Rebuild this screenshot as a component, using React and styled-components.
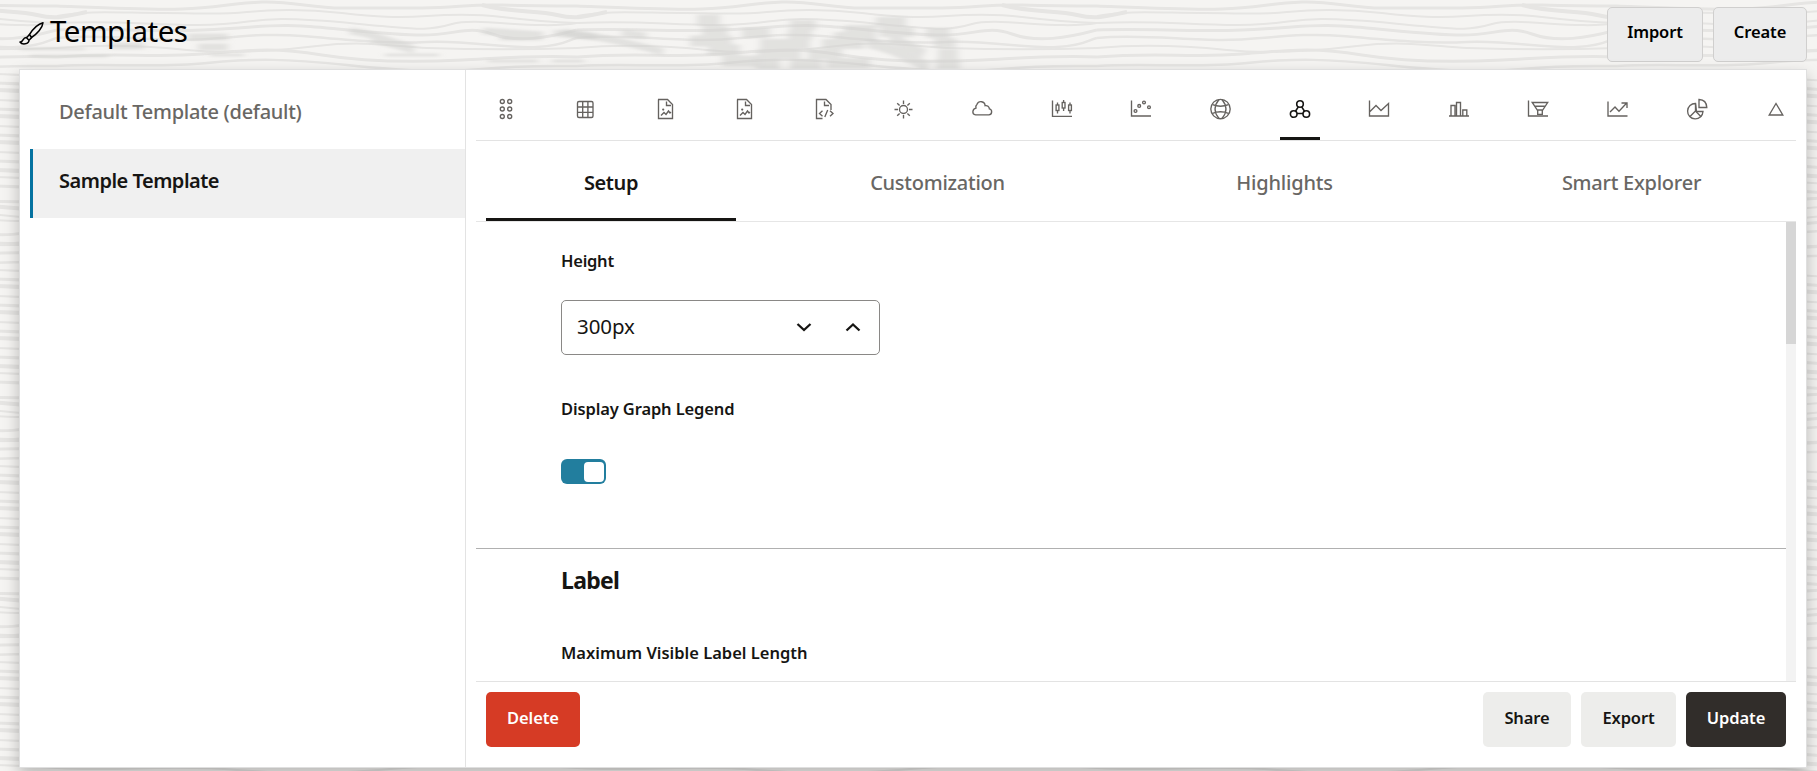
import React from "react";
import styled, { createGlobalStyle } from "styled-components";

const GlobalStyle = createGlobalStyle`
  * { box-sizing: border-box; }
  html, body, #root { height: 100%; margin: 0; }
  body {
    overflow: hidden;
    background: #f5f4f2;
    color: #161513;
    font-family: "Noto Sans", "Open Sans", sans-serif;
  }
  button { font-family: inherit; }
`;

const Page = styled.div`
  position: relative;
  isolation: isolate;
  height: 100vh;
  display: flex;
  flex-direction: column;
  padding: 0 10px 3px 19px;
  overflow: hidden;
`;

const Backdrop = styled.svg`
  position: absolute;
  inset: 0;
  z-index: -1;
  width: 100%;
  height: 100%;
`;

const Header = styled.header`
  flex: none;
  height: 69px;
  display: flex;
  justify-content: space-between;
  align-items: flex-start;
  padding-top: 7px;
`;

const Title = styled.h1`
  display: flex;
  align-items: center;
  gap: 6px;
  margin: 0;
  height: 48px;
  font-size: 29.5px;
  font-weight: 400;
  line-height: 48px;
  letter-spacing: -0.55px;
  color: #000;
`;

const BrushIcon = styled.svg`
  width: 25px;
  height: 23px;
  margin-top: 5px;
`;

const TitleText = styled.span`
  display: block;
`;

const ButtonGroup = styled.div`
  display: flex;
  gap: 10px;
`;

const variants = {
  outlined: "background: #ececec; color: #000; border: 1px solid #d0cfce;",
  neutral: "background: #ededeb; color: #161513; border: 0;",
  danger: "background: #d63b25; color: #fff; border: 0;",
  primary: "background: #312d2a; color: #fff; border: 0;",
};

const Button = styled.button`
  width: ${(p) => p.$width}px;
  height: 55px;
  padding: 0 0 ${(p) => (p.$variant === "outlined" ? 6 : 5)}px;
  border-radius: 5px;
  font-size: 16.5px;
  font-weight: 600;
  letter-spacing: -0.1px;
  ${(p) => variants[p.$variant]}
`;

const Panel = styled.div`
  flex: 1;
  min-height: 0;
  display: flex;
  border: 1px solid #dfdfdf;
  background: #fff;
  box-shadow: 0 7px 15px rgba(0, 0, 0, 0.25);
`;

const Sidebar = styled.nav`
  flex: none;
  width: 446px;
  padding: 10px 0 0 10px;
  border-right: 1px solid #e3e3e3;
`;

const SidebarItem = styled.div`
  height: 69px;
  padding: 0 0 6px ${(p) => (p.$active ? 26 : 29)}px;
  display: flex;
  align-items: center;
  border-left: ${(p) => (p.$active ? "3px solid #0572a0" : "0")};
  background: ${(p) => (p.$active ? "#f0f0f0" : "transparent")};
  color: ${(p) => (p.$active ? "#161513" : "#696764")};
  font-size: 20px;
  font-weight: ${(p) => (p.$active ? 600 : 500)};
  letter-spacing: ${(p) => p.$spacing}px;
`;

const Main = styled.main`
  flex: 1;
  min-width: 0;
  display: flex;
  flex-direction: column;
  padding: 0 10px;
`;

const IconBar = styled.div`
  flex: none;
  height: 71px;
  display: flex;
  justify-content: space-between;
  padding: 0 0 0 10px;
  border-bottom: 1px solid #e3e3e3;
`;

const IconTab = styled.div`
  width: 40px;
  display: flex;
  justify-content: center;
  align-items: center;
  padding-top: ${(p) => (p.$active ? 11 : 8)}px;
  border-bottom: ${(p) => (p.$active ? "3px solid #161513" : "0")};
  color: ${(p) => (p.$active ? "#161513" : "#65625f")};
`;

const Glyph = styled.svg`
  width: 22px;
  height: 22px;
  fill: none;
  stroke: currentColor;
  stroke-width: ${(p) => (p.$bold ? 1.6 : 1.35)};
`;

const Tabs = styled.div`
  flex: none;
  height: 81px;
  display: flex;
  justify-content: space-between;
  padding-left: 10px;
  border-bottom: 1px solid #e6e6e6;
`;

const Tab = styled.div`
  width: ${(p) => p.$width}px;
  display: flex;
  justify-content: center;
  align-items: center;
  padding-top: ${(p) => (p.$active ? 6 : 3)}px;
  border-bottom: ${(p) => (p.$active ? "3px solid #161513" : "0")};
  color: ${(p) => (p.$active ? "#161513" : "#696764")};
  font-size: 20px;
  font-weight: ${(p) => (p.$active ? 600 : 500)};
  letter-spacing: ${(p) => p.$spacing}px;
`;

const ScrollArea = styled.div`
  flex: 1;
  min-height: 0;
  display: flex;
`;

const Scrollbar = styled.div`
  width: 10px;
  background: #f3f3f3;
`;

const Thumb = styled.div`
  height: 122px;
  background: #d6d6d6;
`;

const Form = styled.div`
  flex: 1;
  overflow: hidden;
`;

const Section = styled.section`
  padding: ${(p) => p.$top}px 0 0 85px;
  height: ${(p) => p.$height}px;
  border-bottom: ${(p) => (p.$ruled ? "1px solid #b0b0b0" : "0")};
`;

const Label = styled.div`
  height: 24px;
  line-height: 24px;
  font-size: 16.5px;
  font-weight: 600;
  letter-spacing: ${(p) => p.$spacing || 0}px;
  white-space: nowrap;
`;

const Heading = styled.h2`
  margin: 0 0 46px;
  height: 30px;
  line-height: 30px;
  font-size: 23px;
  font-weight: 700;
  letter-spacing: -0.7px;
`;

const Stepper = styled.div`
  width: 319px;
  height: 55px;
  margin: 27px 0 42px;
  display: flex;
  align-items: center;
  padding: 0 17px 0 15px;
  border: 1px solid #8a8886;
  border-radius: 5px;
`;

const StepperValue = styled.span`
  flex: 1;
  margin-top: -4px;
  font-size: 20.5px;
  letter-spacing: -0.1px;
`;

const Chevron = styled.svg`
  width: 18px;
  height: 18px;
  margin-left: 31px;
  margin-top: -1px;
  fill: none;
  stroke: #161513;
  stroke-width: 2.3;
`;

const Switch = styled.div`
  width: 45px;
  height: 25px;
  margin-top: 38px;
  padding: 3px 2px;
  display: flex;
  justify-content: flex-end;
  border-radius: 6px;
  background: #227e9e;
`;

const Knob = styled.div`
  width: 20px;
  height: 20px;
  border-radius: 4px;
  background: #fff;
`;

const Footer = styled.footer`
  flex: none;
  height: 86px;
  display: flex;
  justify-content: space-between;
  padding: 10px;
  border-top: 1px solid #e3e3e3;
`;

const docShape = (
  <>
    <path d="M4 1.5h9.5l5 5v14h-14v-19z" />
    <path d="M12.5 3.5v4h4.5" />
  </>
);
const picture = (
  <>
    {docShape}
    <path d="M7 17.500l3-3 2 2 2.500-3.500 1.500 2 1-1" />
    <circle cx="9.200" cy="11.600" r="1.100" fill="currentColor" stroke="none" />
  </>
);

const icons = {
  dots: (
    <>
      {[7.300, 14.700].map((x) =>
        [3.500, 11, 18.500].map((y) => <circle key={x + "-" + y} cx={x} cy={y} r="2" />)
      )}
    </>
  ),
  table: (
    <>
      <rect x="3.500" y="3.500" width="15.500" height="16" rx="1.500" />
      <path d="M3.500 9h15.500M3.500 14.300h15.500M8.700 3.500v16M13.900 3.500v16" />
    </>
  ),
  picture,
  picture2: picture,
  code: (
    <>
      <path d="M9.500 20.500h-6v-19h9.500l5 5v5.500" />
      <path d="M11.500 3.500v4h4.500M9.500 12.700l-3 2.800 3 2.800M17 12.700l3 2.800-3 2.800M14.700 12l-2.900 7" />
    </>
  ),
  sun: (
    <>
      <circle cx="11.500" cy="11.500" r="4" />
      <path d="M11.500 2.500v3.500M11.500 17v3.500M2.500 11.500h3.500M17 11.500h3.500M5.200 5.200l2.400 2.400M15.400 15.400l2.400 2.400M5.200 17.800l2.400-2.400M15.400 7.600l2.400-2.400" />
    </>
  ),
  cloud: (
    <path d="M4.600 16.800h13.200a3 3 0 0 0 .6-5.900 3.400 3.400 0 0 0-4.300-3.200A4.200 4.200 0 0 0 6 6.300a3.800 3.800 0 0 0-1 3.800c-3.700.8-4.500 6.200-.4 6.700z" />
  ),
  candles: (
    <>
      <path d="M1.500 2.500v15.800h19.500" />
      <path d="M6.500 4.500v2.500M6.500 12.500v3M12.600 2v2.500M12.600 10v3M19 4.500v2.500M19 12.500v3" />
      <rect x="5.100" y="7" width="2.800" height="5.500" />
      <rect x="11.200" y="4.500" width="2.800" height="5.500" />
      <rect x="17.600" y="7" width="2.800" height="5.500" />
    </>
  ),
  scatter: (
    <>
      <path d="M1.500 2.500v15.500h19.500" />
      <circle cx="5.500" cy="13" r="1.400" />
      <circle cx="9.200" cy="7.900" r="1.400" />
      <circle cx="14" cy="4.500" r="1.400" />
      <circle cx="19" cy="9.200" r="1.400" />
    </>
  ),
  globe: (
    <>
      <circle cx="11.500" cy="11" r="9.700" />
      <path d="M3.500 6.700c5 1.900 11 1.900 16 0M3.500 15.300c5-1.900 11-1.900 16 0M10 1.500c-5 6-5 13 0 19M13 1.500c5 6 5 13 0 19" />
    </>
  ),
  network: (
    <>
      <circle cx="11" cy="6" r="3.300" />
      <circle cx="4.700" cy="16" r="3.300" />
      <circle cx="17.300" cy="16" r="3.300" />
      <path d="M9.300 8.900l-2.800 4.400M12.700 8.900l2.800 4.400M8 15.500h6" />
    </>
  ),
  area: <path d="M1.500 2.500v15.500h19V5.500l-7.500 7-5-5L1.500 14" />,
  bars: <path d="M1 18h20M3 18V7.500h4V18M8.500 18V4.500h4V18M14.800 18v-6h4V18" />,
  funnel: (
    <>
      <path d="M1.500 2.500v15.500h19.500" />
      <path d="M5.200 4.500h15.500l-5.400 8.200v3.700h-4.600v-3.700zM7.600 8.200h10.600M10.700 12h4.600" />
    </>
  ),
  trend: (
    <>
      <path d="M2 3.500v14.500h19.500" />
      <path d="M4 14l5-5 4 4.200 7.500-7.900M15.500 5h5.500v5" />
    </>
  ),
  pie: (
    <>
      <path d="M9.500 5.500a7.700 7.700 0 1 0 7.500 8H10.500z" />
      <path d="M9.500 5.500v7.500L4 18.500M9.500 13l5.800 6" />
      <path d="M13 1.500v8h7.800c-.2-5-3.200-7.800-7.800-8z" />
    </>
  ),
  triangle: <path d="M11 5.500l6.800 11.500H4.200z" />,
};

const grain = [
  ["M0 6 C50 8 90 10 125 9 S175 3 205 2 S255 8 285 8 S330 8 365 8 S410 4 445 5 S490 6 520 6", 3],
  ["M0 16 C30 10 65 13 105 13 S160 15 190 12 S250 9 285 13 S340 18 370 16 S420 14 445 17 S490 22 520 23", 2],
  ["M425 5 C455 13 480 10 500 15 S530 16 550 12 M-95 5 C-65 13 -40 10 -20 15 S10 16 30 12", 4],
  ["M0 23 C60 20 90 25 140 25 S190 19 225 19 S290 23 325 26 S370 31 395 24 S480 30 520 23", 2],
  ["M0 30 C50 28 90 32 145 30 S210 24 245 26 S330 35 365 35 S410 25 435 34 S490 38 520 30", 3],
  ["M0 38 C40 34 85 40 125 40 S200 32 245 36 S330 44 370 42 S450 49 480 47 S510 40 520 38", 2.5],
  ["M0 48 C45 44 90 46 130 50 S210 52 260 46 S340 47 370 48 S465 50 520 48", 2],
  ["M0 57 C60 52 95 58 145 54 S215 47 265 55 S365 62 405 60 S480 55 520 57", 3],
  ["M0 66 C45 63 100 68 150 63 S230 59 290 65 S385 73 425 69 S490 66 520 66", 2.5],
];
const ticks = [77, 86, 93, 103, 112, 119, 129, 138, 145, 155, 164, 173, 180, 189];

const Wood = () => (
  <Backdrop>
    <defs>
      <filter id="soft" x="-5%" y="-20%" width="110%" height="140%">
        <feGaussianBlur stdDeviation="3.5 1.2" />
      </filter>
      <pattern id="grain" x="57" y="0" width="520" height="196" patternUnits="userSpaceOnUse">
        <g fill="none" stroke="#e6e5e3">
          {grain.map(([d, w], i) => (
            <path key={i} d={d} strokeWidth={w} />
          ))}
          {ticks.map((y, i) => (
            <path
              key={y}
              strokeWidth={2 + (i % 3)}
              d={`M0 ${y} C60 ${y + 4} 110 ${y - 4} 180 ${y + 2} S300 ${y + 4} 360 ${y - 1} S470 ${y - 3} 520 ${y}`}
            />
          ))}
        </g>
      </pattern>
    </defs>
    <rect width="100%" height="100%" fill="url(#grain)" />
    <g filter="url(#soft)" fill="none" stroke="#d0cfcd" strokeOpacity=".5">
      <path strokeWidth="7" d="M188 37h40M198 47h30M483 31l60 4M500 37h42M554 33l42 4M622 33l24 3M110 46h34" />
      <path strokeWidth="7" d="M350 31c24 2 38 11 62 16M372 39l42 11M563 32c35 4 70 12 100 20" />
      <path strokeWidth="3" d="M20 49h65M30 56h78M210 55h34M488 61h50M552 61h32M385 55h54" />
      <path strokeWidth="11" d="M697 20h23M702 31h26M690 41h42M708 50h32M722 61h36" />
      <path strokeWidth="10" d="M742 33h28M760 44h50M757 54h44M756 64h24M790 25h26M788 35h24M790 64h32" />
      <path strokeWidth="10" d="M822 44h42M808 54h34M826 63h44M844 30h32M834 37h42" />
      <path strokeWidth="10" d="M876 22h30M880 32h34M868 43c24 4 38 14 60 24M926 33h24M934 43h22M938 54h20M936 64h24M890 37l34 17" />
    </g>
  </Backdrop>
);

const tabs = [
  { text: "Setup", width: 250, spacing: -0.4, active: true },
  { text: "Customization", width: 329, spacing: -0.25 },
  { text: "Highlights", width: 291, spacing: -0.2 },
  { text: "Smart Explorer", width: 329, spacing: -0.25 },
];

export default function App() {
  return (
    <>
      <GlobalStyle />
      <Page>
        <Wood />
        <Header>
          <Title>
            <BrushIcon viewBox="0 0 25 23" fill="none" stroke="#000" strokeWidth="1.5" strokeLinejoin="round">
              <path d="M10.500 12.500C14 7 19.500 2 24 .800C23.500 6 18 12 12.500 15.500z" />
              <path d="M10.500 12.500l-3 3.200 2.500 2.600 2.700-2.800M7.500 15.500c-4-.5-3 5-6.500 4.500 2 3 9 2.500 9-2" />
            </BrushIcon>
            <TitleText>Templates</TitleText>
          </Title>
          <ButtonGroup>
            <Button $variant="outlined" $width={96}>Import</Button>
            <Button $variant="outlined" $width={94}>Create</Button>
          </ButtonGroup>
        </Header>
        <Panel>
          <Sidebar>
            <SidebarItem $spacing={-0.28}>Default Template (default)</SidebarItem>
            <SidebarItem $spacing={-0.5} $active>Sample Template</SidebarItem>
          </Sidebar>
          <Main>
            <IconBar>
              {Object.keys(icons).map((name) => (
                <IconTab key={name} $active={name === "network"}>
                  <Glyph viewBox="0 0 22 22" $bold={name === "network"}>{icons[name]}</Glyph>
                </IconTab>
              ))}
            </IconBar>
            <Tabs>
              {tabs.map((t) => (
                <Tab key={t.text} $width={t.width} $spacing={t.spacing} $active={t.active}>{t.text}</Tab>
              ))}
            </Tabs>
            <ScrollArea>
              <Form>
                <Section $top={27} $height={327} $ruled>
                  <Label $spacing={-0.25}>Height</Label>
                  <Stepper>
                    <StepperValue>300px</StepperValue>
                    <Chevron viewBox="0 0 18 18"><path d="M2.500 6l6.500 6 6.500-6" /></Chevron>
                    <Chevron viewBox="0 0 18 18"><path d="M2.500 12.500l6.500-6 6.500 6" /></Chevron>
                  </Stepper>
                  <Label $spacing={-0.13}>Display Graph Legend</Label>
                  <Switch><Knob /></Switch>
                </Section>
                <Section $top={16} $height={132}>
                  <Heading>Label</Heading>
                  <Label>Maximum Visible Label Length</Label>
                </Section>
              </Form>
              <Scrollbar><Thumb /></Scrollbar>
            </ScrollArea>
            <Footer>
              <Button $variant="danger" $width={94}>Delete</Button>
              <ButtonGroup>
                <Button $variant="neutral" $width={88}>Share</Button>
                <Button $variant="neutral" $width={95}>Export</Button>
                <Button $variant="primary" $width={100}>Update</Button>
              </ButtonGroup>
            </Footer>
          </Main>
        </Panel>
      </Page>
    </>
  );
}
